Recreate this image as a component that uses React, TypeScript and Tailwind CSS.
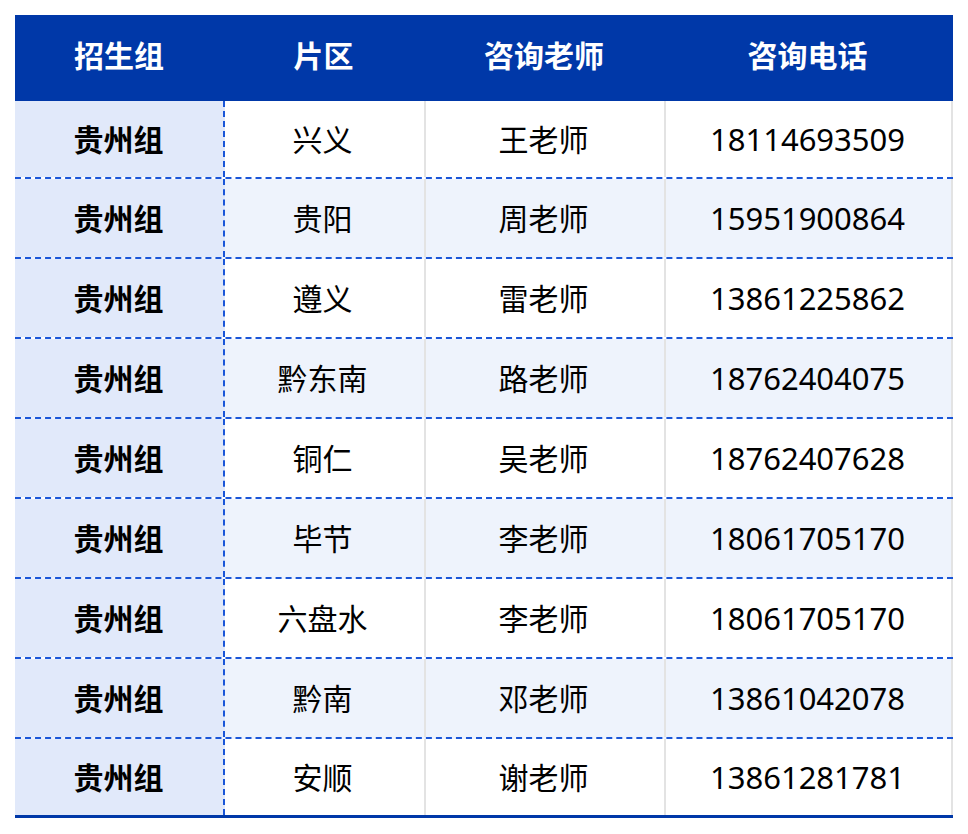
const rows = [
  { area: '兴义', teacher: '王老师', phone: '18114693509' },
  { area: '贵阳', teacher: '周老师', phone: '15951900864' },
  { area: '遵义', teacher: '雷老师', phone: '13861225862' },
  { area: '黔东南', teacher: '路老师', phone: '18762404075' },
  { area: '铜仁', teacher: '吴老师', phone: '18762407628' },
  { area: '毕节', teacher: '李老师', phone: '18061705170' },
  { area: '六盘水', teacher: '李老师', phone: '18061705170' },
  { area: '黔南', teacher: '邓老师', phone: '13861042078' },
  { area: '安顺', teacher: '谢老师', phone: '13861281781' },
];

const font = { fontFamily: '"Noto Sans", "Noto Sans CJK SC", sans-serif' };

export default function App() {
  return (
    <div className="bg-white min-h-[834px] pt-[15px] pl-[15px]" style={font}>
      <div className="w-[938px] border-b-[3px] border-[#0038a8]">
        {/* Header */}
        <div className="flex h-[86px] pb-[5px] bg-[#0038a8] text-white font-bold text-[30px]">
          <div className="w-[210px] flex items-center justify-center pr-[2px]">招生组</div>
          <div className="w-[201px] flex items-center justify-center pr-[4px]">片区</div>
          <div className="w-[240px] flex items-center justify-center pr-[4px]">咨询老师</div>
          <div className="w-[287px] flex items-center justify-center pr-[4px]">咨询电话</div>
        </div>

        {/* Body */}
        {rows.map((r, i) => {
          const first = i === 0;
          const last = i === rows.length - 1;
          const h = first ? 'h-[78px]' : last ? 'h-[76px]' : 'h-[80px]';
          const border = last ? '' : 'border-b-2 border-dashed border-[#1a56d8]';
          const bg = i % 2 === 1 ? 'bg-[#eef3fc]' : 'bg-white';
          return (
            <div key={i} className={`flex text-[30px] text-black ${h} ${border} ${bg}`}>
              <div className="w-[210px] flex items-center justify-center pr-[1px] bg-[#e1e9fa] font-bold border-r-2 border-dashed border-[#1a56d8]">
                贵州组
              </div>
              <div className="w-[201px] flex items-center justify-center pr-[4px] border-r-2 border-[#e3e3e3]">
                {r.area}
              </div>
              <div className="w-[240px] flex items-center justify-center pr-[3px] border-r-2 border-[#e3e3e3]">
                {r.teacher}
              </div>
              <div className="w-[287px] flex items-center justify-center pr-[2px] text-[31px] border-r-2 border-[#e3e3e3]">
                {r.phone}
              </div>
            </div>
          );
        })}
      </div>
    </div>
  );
}
